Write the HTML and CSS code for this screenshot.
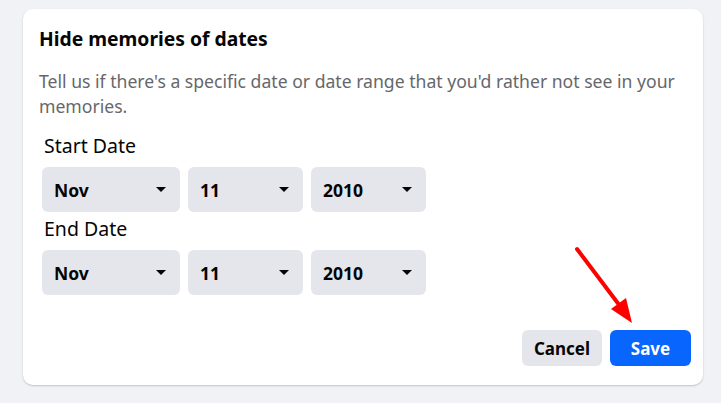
FILE: index.html
```html
<!DOCTYPE html>
<html>
<head>
<meta charset="utf-8">
<link rel="stylesheet" href="styles.css">
</head>
<body>
<div class="card">
  <h1 class="title">Hide memories of dates</h1>
  <p class="desc">Tell us if there's a specific date or date range that you'd rather not see in your memories.</p>
  <div class="group">
    <div class="label">Start Date</div>
    <div class="row">
      <div class="sel sel-month"><span>Nov</span><i class="caret"></i></div>
      <div class="sel"><span>11</span><i class="caret"></i></div>
      <div class="sel"><span>2010</span><i class="caret"></i></div>
    </div>
  </div>
  <div class="group">
    <div class="label">End Date</div>
    <div class="row">
      <div class="sel sel-month"><span>Nov</span><i class="caret"></i></div>
      <div class="sel"><span>11</span><i class="caret"></i></div>
      <div class="sel"><span>2010</span><i class="caret"></i></div>
    </div>
  </div>
  <div class="actions">
    <div class="btn btn-cancel">Cancel</div>
    <div class="btn btn-save">Save</div>
  </div>
</div>
<svg class="annot" width="721" height="403" viewBox="0 0 721 403">
  <line x1="577" y1="249" x2="620" y2="306" stroke="#ff0000" stroke-width="4" stroke-linecap="round"/>
  <polygon points="632,323 611,309 626,298" fill="#ff0000"/>
</svg>
</body>
</html>
```

FILE: styles.css
```css
html, body {
  margin: 0;
  padding: 0;
}
body {
  background: #f0f2f5;
  font-family: "Noto Sans", "Liberation Sans", sans-serif;
  color: #050505;
  width: 721px;
  height: 403px;
  overflow: hidden;
  position: relative;
}
.card {
  margin: 9px 0 0 23px;
  width: 680px;
  height: 376px;
  box-sizing: border-box;
  background: #fff;
  border-radius: 10px;
  box-shadow: 0 1px 2px rgba(0, 0, 0, 0.2);
  padding: 0 12px 0 16px;
  display: flex;
  flex-direction: column;
}
.title {
  margin: 18px 0 0 0;
  font-size: 19.3px;
  line-height: 24px;
  font-weight: 700;
}
.desc {
  margin: 18px 0 0 0;
  font-size: 17.6px;
  line-height: 25px;
  color: #65676b;
}
.group {
  display: flex;
  flex-direction: column;
  padding-left: 3px;
}
.label {
  font-size: 19.5px;
  line-height: 26px;
  margin: 14px 0 0 2px;
}
.group + .group .label {
  margin-top: 4px;
}
.row {
  display: flex;
  gap: 8px;
  margin-top: 8px;
}
.sel {
  width: 115px;
  height: 45px;
  box-sizing: border-box;
  background: #e4e6eb;
  border-radius: 6px;
  display: flex;
  align-items: center;
  justify-content: space-between;
  padding: 0 14px 0 12px;
  font-size: 17.5px;
  font-weight: 700;
}
.sel-month {
  width: 138px;
}
.caret {
  width: 0;
  height: 0;
  border-left: 5.5px solid transparent;
  border-right: 5.5px solid transparent;
  border-top: 5.5px solid #050505;
}
.actions {
  margin-top: auto;
  margin-bottom: 19px;
  display: flex;
  justify-content: flex-end;
  gap: 8px;
}
.btn {
  height: 36px;
  border-radius: 6px;
  display: flex;
  align-items: center;
  justify-content: center;
  font-size: 17px;
  font-weight: 700;
}
.btn-cancel {
  width: 80px;
  background: #e4e6eb;
  color: #050505;
}
.btn-save {
  width: 81px;
  background: #0866ff;
  color: #fff;
}
.annot {
  position: absolute;
  left: 0;
  top: 0;
  pointer-events: none;
}
```
